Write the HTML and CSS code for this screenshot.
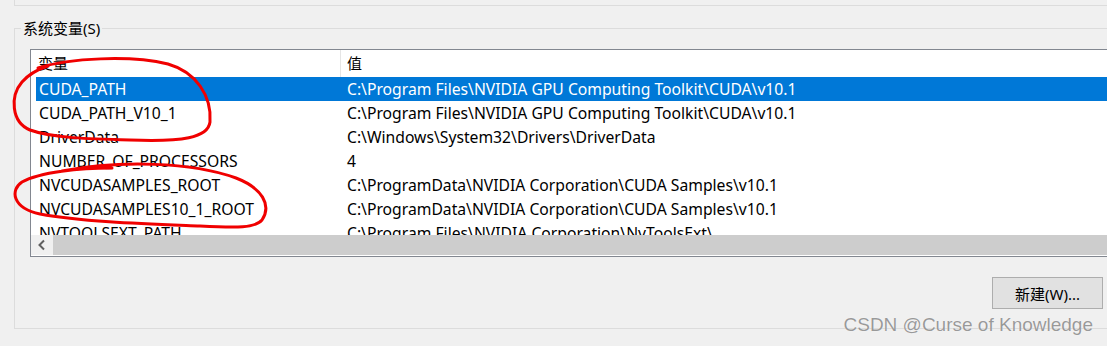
FILE: index.html
```html
<!DOCTYPE html>
<html lang="zh-CN">
<head>
    <meta charset="UTF-8">
    <title>系统变量</title>
    <link rel="stylesheet" href="styles.css">
</head>
<body>
    <div class="prev-group"></div>
    <fieldset class="group">
        <legend class="group-title">系统变量(S)</legend>
        <div class="list">
            <div class="list-head">
                <div class="col-name">变量</div>
                <div class="col-value">值</div>
            </div>
            <div class="list-body">
                <div class="row selected">
                    <div class="col-name">CUDA_PATH</div>
                    <div class="col-value">C:\Program Files\NVIDIA GPU Computing Toolkit\CUDA\v10.1</div>
                </div>
                <div class="row">
                    <div class="col-name">CUDA_PATH_V10_1</div>
                    <div class="col-value">C:\Program Files\NVIDIA GPU Computing Toolkit\CUDA\v10.1</div>
                </div>
                <div class="row">
                    <div class="col-name">DriverData</div>
                    <div class="col-value">C:\Windows\System32\Drivers\DriverData</div>
                </div>
                <div class="row">
                    <div class="col-name">NUMBER_OF_PROCESSORS</div>
                    <div class="col-value">4</div>
                </div>
                <div class="row">
                    <div class="col-name">NVCUDASAMPLES_ROOT</div>
                    <div class="col-value">C:\ProgramData\NVIDIA Corporation\CUDA Samples\v10.1</div>
                </div>
                <div class="row">
                    <div class="col-name">NVCUDASAMPLES10_1_ROOT</div>
                    <div class="col-value">C:\ProgramData\NVIDIA Corporation\CUDA Samples\v10.1</div>
                </div>
                <div class="row">
                    <div class="col-name">NVTOOLSEXT_PATH</div>
                    <div class="col-value">C:\Program Files\NVIDIA Corporation\NvToolsExt\</div>
                </div>
            </div>
            <div class="hscroll">
                <div class="scroll-btn">
                    <svg width="10" height="12" viewBox="0 0 10 12"><path d="M7 1.5 L2.5 6 L7 10.5" fill="none" stroke="#606060" stroke-width="2"/></svg>
                </div>
                <div class="scroll-thumb"></div>
            </div>
        </div>
        <div class="actions">
            <button class="btn">新建(W)...</button>
        </div>
    </fieldset>

    <!-- 红色手绘圈 -->
    <svg class="marks" width="1107" height="346" viewBox="0 0 1107 346">
        <path d="M38 68 C70 58 130 55 168 64 C196 72 212 96 210 122 C208 138 182 142 130 140 C90 139 52 138 30 130 C11 122 10 96 22 82 C28 75 36 70 48 66" />
        <path d="M62 171 C120 160 192 162 236 178 C262 188 272 205 262 220 C255 228 238 228 200 226 C150 224 82 222 40 214 C12 208 10 190 22 182 C40 172 80 168 112 168" />
    </svg>

    <div class="watermark">CSDN @Curse of Knowledge</div>
</body>
</html>
```

FILE: styles.css
```css
* {
    box-sizing: border-box;
}

body {
    margin: 0;
    width: 1107px;
    height: 346px;
    overflow: hidden;
    position: relative;
    background: #f0f0f0;
    font-family: "Noto Sans", "Noto Sans CJK SC", sans-serif;
    font-size: 15px;
    color: #000;
}

.prev-group {
    height: 6px;
    margin-left: 14px;
    border-left: 1px solid #dcdcdc;
    border-bottom: 1px solid #dcdcdc;
}

.group {
    margin: 12px 0 0 14px;
    padding: 0;
    width: 1200px;
    height: 311px;
    border: 1px solid #dcdcdc;
    min-width: 0;
}

.group-title {
    margin-left: 6px;
    padding: 0 2px;
    line-height: 20px;
}

.list {
    margin: 11px 0 0 15px;
    width: 1200px;
    height: 208px;
    border: 1px solid #828790;
    background: #fff;
    display: flex;
    flex-direction: column;
}

.list-head {
    display: flex;
    height: 27px;
    align-items: stretch;
}

.list-head .col-name {
    width: 310px;
    padding-left: 7px;
    border-right: 1px solid #e5e5e5;
    line-height: 27px;
}

.list-head .col-value {
    padding-left: 6px;
    line-height: 27px;
}

.list-body {
    height: 158px;
    overflow: hidden;
    font-size: 15.7px;
}

.row {
    display: flex;
    height: 24px;
    line-height: 24px;
    margin-left: 5px;
    white-space: nowrap;
}

.row .col-name {
    width: 305px;
    padding-left: 3px;
}

.row .col-value {
    padding-left: 6px;
}

.row.selected {
    background: #0078d7;
    color: #fff;
}

.hscroll {
    display: flex;
    height: 20px;
}

.scroll-btn {
    width: 22px;
    background: #f0f0f0;
    display: flex;
    align-items: center;
    justify-content: center;
}

.scroll-thumb {
    flex: 1;
    background: #cdcdcd;
}

.actions {
    display: flex;
    justify-content: flex-start;
    padding: 20px 0 0 977px;
}

.btn {
    width: 111px;
    height: 32px;
    background: #e1e1e1;
    border: 1px solid #adadad;
    font-family: inherit;
    font-size: 15px;
    color: #000;
    padding: 0;
}

.marks {
    position: absolute;
    left: 0;
    top: 0;
    pointer-events: none;
}

.marks path {
    fill: none;
    stroke: #f00000;
    stroke-width: 3;
    stroke-linecap: round;
}

.watermark {
    position: absolute;
    right: 14px;
    top: 314px;
    font-family: "Liberation Sans", sans-serif;
    font-size: 19px;
    color: rgba(120, 120, 120, 0.75);
    text-shadow: 0 0 1px #fff;
}
```
